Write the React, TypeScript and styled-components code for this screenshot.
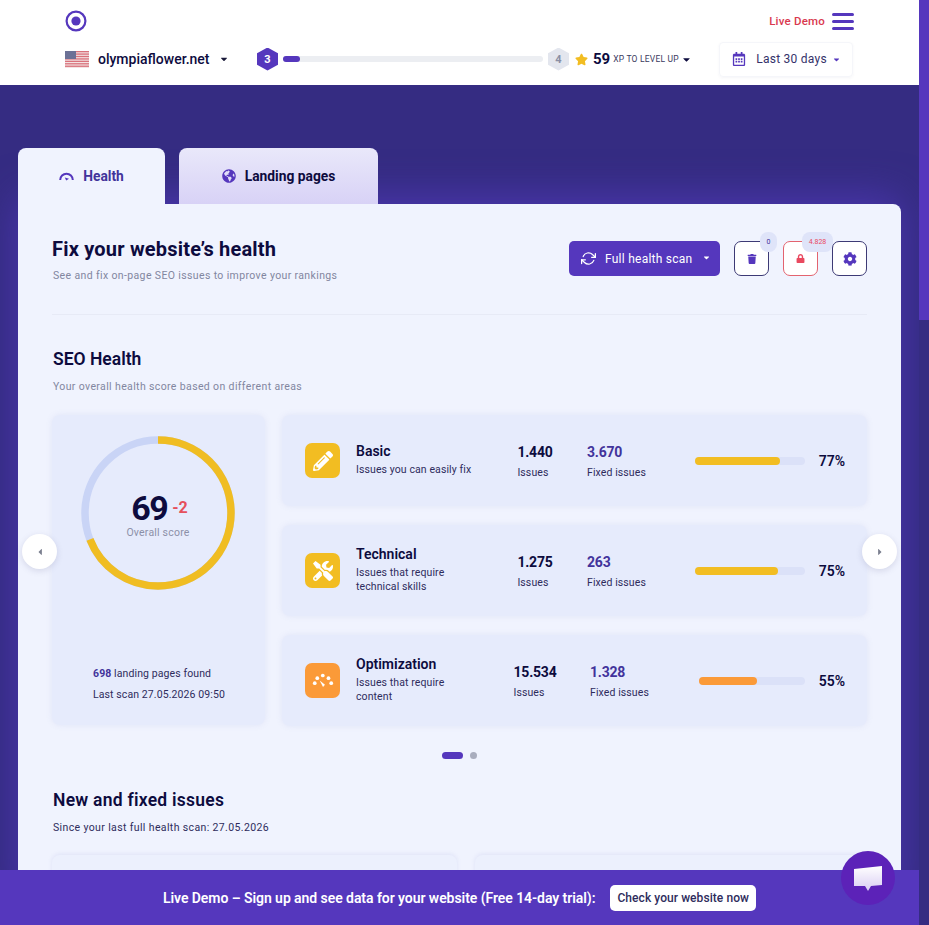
import React from "react";
import styled, { createGlobalStyle } from "styled-components";
import { FaPencilAlt, FaTools, FaTrash, FaLock, FaCog, FaGlobeAmericas, FaStar, FaCaretDown, FaCaretLeft, FaCaretRight, FaRegCalendarAlt } from "react-icons/fa";
import { FiRefreshCw } from "react-icons/fi";

const Global = createGlobalStyle`
  html, body { margin: 0; padding: 0; height: 100%; overflow: hidden; }
  body { font-family: "Roboto", "Liberation Sans", sans-serif; color: #0d0b3e; }
  * { box-sizing: border-box; }
`;

const Page = styled.div`
  display: flex;
  width: 929px;
  height: 925px;
  overflow: hidden;
  position: relative;
  background: #352c82;
`;
const Main = styled.div`
  width: 919px;
  height: 925px;
  overflow: hidden;
  flex: none;
`;
const Scrollbar = styled.div`
  width: 10px;
  flex: none;
  background: #352c82;
`;
const Thumb = styled.div`
  height: 320px;
  background: #5537bd;
`;
const Header = styled.header`
  height: 85px;
  background: #fff;
  padding: 0 65px;
  display: flex;
  flex-direction: column;
`;
const TopRow = styled.div`
  height: 41px;
  display: flex;
  align-items: center;
  justify-content: space-between;
  padding-top: 1px;
`;
const RightTop = styled.div`
  display: flex;
  align-items: center;
  gap: 7px;
`;
const LiveDemo = styled.span`
  font-size: 11.5px;
  font-weight: 500;
  color: #d9394f;
  letter-spacing: 0.2px;
`;
const Burger = styled.div`
  width: 22px;
  display: flex;
  flex-direction: column;
  gap: 4px;
`;
const BurgerLine = styled.span`
  height: 3px;
  border-radius: 2px;
  background: #5537bd;
`;
const BottomRow = styled.div`
  height: 36px;
  display: flex;
  align-items: center;
`;
const Domain = styled.span`
  font-size: 14px;
  font-weight: 500;
  color: #0d0b3e;
  margin-left: 9px;
  letter-spacing: 0;
  width: 121px;
`;
const DomainCaret = styled.span`
  width: 38px;
  color: #1a1a3a;
  font-size: 10px;
  display: flex;
`;
const Hexagon = styled.div<{ $active?: boolean }>`
  width: 21px;
  height: 23px;
  flex: none;
  clip-path: polygon(50% 0, 100% 25%, 100% 75%, 50% 100%, 0 75%, 0 25%);
  background: ${(p) => (p.$active ? "#5537bd" : "#e3e6ee")};
  color: ${(p) => (p.$active ? "#fff" : "#8a8fa5")};
  font-size: 11px;
  font-weight: 700;
  display: flex;
  align-items: center;
  justify-content: center;
`;
const XpTrack = styled.div`
  width: 260px;
  height: 6px;
  margin: 0 5px;
  border-radius: 4px;
  background: #eceef2;
`;
const XpFill = styled.div`
  width: 17px;
  height: 100%;
  border-radius: 4px;
  background: #5537bd;
`;
const XpNumber = styled.span`
  font-size: 15px;
  font-weight: 700;
  margin-left: 5px;
  color: #0d0b3e;
`;
const XpLabel = styled.span`
  font-size: 8.5px;
  color: #3a3a5e;
  margin-left: 3px;
  letter-spacing: 0.2px;
  width: 68px;
`;
const StarMark = styled.span`
  color: #f2bd22;
  font-size: 13px;
  display: flex;
  margin-left: 6px;
`;
const SmallCaret = styled.span`
  color: #0d0b3e;
  font-size: 11px;
  display: flex;
  width: 38px;
`;
const DateBox = styled.div`
  width: 134px;
  height: 35px;
  border: 1px solid #f5f6fa;
  border-radius: 4px;
  display: flex;
  align-items: center;
  padding: 0 11px 0 12px;
  box-shadow: 0 1px 3px rgba(50, 50, 110, 0.05);
`;
const CalendarMark = styled.span`
  color: #5537bd;
  font-size: 14px;
  display: flex;
  margin-right: 10px;
`;
const DateText = styled.span`
  font-size: 12px;
  color: #35326a;
  letter-spacing: 0.25px;
  flex: 1;
`;
const DateCaret = styled.span`
  font-size: 9px;
  color: #5537bd;
  display: flex;
`;
const Content = styled.div`
  padding: 63px 18px 0;
`;
const Tabs = styled.div`
  display: flex;
  gap: 14px;
  height: 56px;
  position: relative;
  z-index: 1;
`;
const Tab = styled.div<{ $active?: boolean }>`
  width: ${(p) => (p.$active ? "147px" : "199px")};
  border-radius: 8px 8px 0 0;
  background: ${(p) => (p.$active ? "#f0f3fe" : "linear-gradient(#e9e8fa, #d8d2f6)")};
  display: flex;
  align-items: center;
  justify-content: center;
  gap: 9px;
  font-size: 13.8px;
  font-weight: 700;
  color: ${(p) => (p.$active ? "#42339b" : "#0d0b3e")};
  padding-bottom: 1px;
`;
const TabIcon = styled.span`
  color: #5537bd;
  display: flex;
  font-size: 14px;
`;
const Card = styled.section`
  position: relative;
  background: #f0f3fe;
  height: 700px;
  border-radius: 0 8px 0 0;
  padding: 0 34px;
  box-shadow: 0 -6px 40px rgba(88, 60, 200, 0.65);
`;
const CardHead = styled.div`
  height: 111px;
  border-bottom: 1px solid #e7eaf6;
  display: flex;
  justify-content: space-between;
  padding-top: 37px;
`;
const Title = styled.h1`
  font-size: 20px;
  font-weight: 700;
  line-height: 24px;
  letter-spacing: 0.2px;
  margin: -4px 0 0;
  color: #0d0b3e;
`;
const Sub = styled.p`
  font-size: 10.5px;
  line-height: 14px;
  margin: 8px 0 0 1px;
  color: #8286a0;
  letter-spacing: 0.37px;
`;
const Actions = styled.div`
  display: flex;
  gap: 14px;
`;
const ScanButton = styled.div`
  width: 151px;
  height: 35px;
  border-radius: 5px;
  background: #5537bd;
  color: #fff;
  display: flex;
  align-items: center;
  padding-left: 12px;
  font-size: 12px;
  font-weight: 400;
  letter-spacing: 0.25px;
`;
const ScanLabel = styled.span`
  margin: 0 9px 0 9px;
`;
const ScanIcon = styled.span`
  display: flex;
  font-size: 15px;
`;
const ScanCaret = styled.span`
  display: flex;
  font-size: 9px;
  margin-top: -3px;
`;
const IconButton = styled.div<{ $danger?: boolean }>`
  width: 35px;
  height: 35px;
  border-radius: 7px;
  background: #fff;
  border: 1px solid ${(p) => (p.$danger ? "#e3636f" : "#3d3a75")};
  color: ${(p) => (p.$danger ? "#e9495f" : "#5537bd")};
  font-size: ${(p) => (p.$danger ? "9px" : "10px")};
  display: flex;
  align-items: center;
  justify-content: center;
  position: relative;
`;
const CogButton = styled(IconButton)`
  font-size: 14px;
`;
const Badge = styled.span<{ $danger?: boolean }>`
  position: absolute;
  top: -10px;
  left: ${(p) => (p.$danger ? "18px" : "25px")};
  min-width: ${(p) => (p.$danger ? "31px" : "17px")};
  height: 20px;
  border-radius: 8px;
  background: #dfe4f9;
  color: ${(p) => (p.$danger ? "#e9495f" : "#42339b")};
  font-size: 7px;
  display: flex;
  align-items: center;
  justify-content: center;
`;
const SectionTitle = styled.h2`
  font-size: 17.5px;
  font-weight: 600;
  line-height: 22px;
  margin: 33px 0 0 1px;
  color: #0d0b3e;
`;
const SectionSub = styled.p`
  font-size: 10.5px;
  line-height: 14px;
  margin: 10px 0 0 1px;
  color: #8286a0;
  letter-spacing: 0.37px;
`;
const HealthGrid = styled.div`
  display: grid;
  grid-template-columns: 213px 585px;
  gap: 17px;
  margin-top: 21px;
  margin-right: -2px;
`;
const ScorePanel = styled.div`
  height: 310px;
  background: #e6ebfc;
  border-radius: 8px;
  box-shadow: 0 0 6px rgba(120, 130, 200, 0.12);
  display: flex;
  flex-direction: column;
  align-items: center;
  padding-top: 21px;
`;
const Donut = styled.div`
  width: 154px;
  height: 154px;
  position: relative;
  margin-left: -1px;
`;
const DonutCenter = styled.div`
  position: absolute;
  inset: 0;
  display: flex;
  flex-direction: column;
  align-items: center;
  justify-content: center;
  padding-top: 4px;
`;
const ScoreLine = styled.div`
  display: flex;
  align-items: center;
  gap: 5px;
  padding-left: 3px;
`;
const ScoreValue = styled.span`
  font-size: 34px;
  font-weight: 700;
  line-height: 32px;
  letter-spacing: -1.6px;
  color: #0d0b3e;
`;
const ScoreDelta = styled.span`
  font-size: 16px;
  font-weight: 700;
  color: #e5505c;
`;
const ScoreCaption = styled.span`
  font-size: 10.5px;
  color: #8c90a8;
  margin-top: 2px;
  letter-spacing: 0.2px;
`;
const ScoreFoot = styled.div`
  margin-top: 73px;
  font-size: 10.5px;
  line-height: 21px;
  color: #2e2c5c;
  letter-spacing: 0.1px;
  padding-left: 1px;
`;
const FootStrong = styled.strong`
  color: #42339b;
  font-weight: 700;
`;
const Rows = styled.div`
  display: flex;
  flex-direction: column;
  gap: 19px;
`;
const Row = styled.div`
  height: 91px;
  background: #e6ebfc;
  border-radius: 8px;
  box-shadow: 0 0 6px rgba(120, 130, 200, 0.12);
  display: grid;
  grid-template-columns: 51px 146px 66px 127px 1fr;
  align-items: center;
  padding: 0 22px 0 23px;
`;
const RowIcon = styled.div<{ $color: string }>`
  width: 35px;
  height: 35px;
  border-radius: 7px;
  background: ${(p) => p.$color};
  color: #fff;
  font-size: 20px;
  display: flex;
  align-items: center;
  justify-content: center;
`;
const RowInfo = styled.div`
  margin-top: -2px;
`;
const RowTitle = styled.div`
  font-size: 14px;
  font-weight: 600;
  line-height: 18px;
  color: #0d0b3e;
  margin-bottom: 3px;
`;
const RowSub = styled.div`
  font-size: 10.5px;
  line-height: 14px;
  color: #2e2c5c;
  letter-spacing: 0.1px;
  width: 122px;
`;
const Metric = styled.div`
  display: flex;
  flex-direction: column;
  align-items: flex-start;
  justify-self: center;
  padding-top: 2px;
`;
const FixedMetric = styled.div<{ $offset: number }>`
  padding: 2px 0 0 ${(p) => p.$offset}px;
`;
const MetricValue = styled.div<{ $accent?: boolean }>`
  font-size: 14px;
  font-weight: 700;
  line-height: 19px;
  letter-spacing: -0.2px;
  color: ${(p) => (p.$accent ? "#42339b" : "#0d0b3e")};
`;
const MetricLabel = styled.div`
  font-size: 10.5px;
  line-height: 14px;
  margin-top: 4px;
  color: #2e2c5c;
  letter-spacing: 0.1px;
`;
const Progress = styled.div`
  display: flex;
  align-items: center;
  justify-content: flex-end;
  gap: 13px;
`;
const BarTrack = styled.div<{ $w: number }>`
  width: ${(p) => p.$w}px;
  height: 8px;
  border-radius: 4px;
  background: #dbe1f8;
`;
const BarFill = styled.div<{ $color: string }>`
  height: 100%;
  border-radius: 4px;
  background: ${(p) => p.$color};
`;
const Pct = styled.span`
  font-size: 14px;
  font-weight: 600;
  color: #0d0b3e;
  width: 27px;
  text-align: right;
`;
const Dots = styled.div`
  display: flex;
  justify-content: center;
  gap: 7px;
  margin-top: 26px;
  height: 7px;
  margin-left: -1px;
`;
const Dot = styled.span<{ $active?: boolean }>`
  width: ${(p) => (p.$active ? "21px" : "7px")};
  height: 7px;
  border-radius: 4px;
  background: ${(p) => (p.$active ? "#5537bd" : "#a9adbe")};
`;
const SecondTitle = styled(SectionTitle)`
  margin-top: 30px;
  letter-spacing: 0.25px;
`;
const Since = styled.p`
  font-size: 10.5px;
  line-height: 14px;
  margin: 10px 0 0 1px;
  color: #2e2c5c;
  letter-spacing: 0.37px;
`;
const IssueCards = styled.div`
  display: grid;
  grid-template-columns: 405px 392px;
  gap: 18px;
  margin-top: 20px;
`;
const IssueCard = styled.div`
  height: 120px;
  border-radius: 8px;
  background: #ecf0fd;
  box-shadow: 0 -1px 4px rgba(120, 130, 200, 0.14);
`;
const Arrow = styled.div<{ $side: "left" | "right" }>`
  position: absolute;
  top: 330px;
  ${(p) => (p.$side === "left" ? "left: 4px;" : "right: 4px;")}
  width: 35px;
  height: 35px;
  border-radius: 50%;
  background: #fff;
  box-shadow: 0 2px 6px rgba(90, 90, 140, 0.18);
  color: #7b7f8f;
  font-size: 10px;
  display: flex;
  align-items: center;
  justify-content: center;
`;
const Banner = styled.div`
  position: absolute;
  left: 0;
  bottom: 0;
  width: 919px;
  height: 55px;
  background: #5537bd;
  display: flex;
  align-items: center;
  justify-content: center;
  gap: 15px;
  color: #fff;
`;
const BannerText = styled.span`
  font-size: 14px;
  font-weight: 600;
  letter-spacing: -0.06px;
`;
const BannerButton = styled.span`
  height: 26px;
  padding: 0 7px;
  border-radius: 5px;
  background: #fff;
  color: #2e2c5c;
  font-size: 12px;
  font-weight: 500;
  letter-spacing: 0.07px;
  display: flex;
  align-items: center;
`;
const Chat = styled.div`
  position: absolute;
  left: 841px;
  top: 851px;
  width: 54px;
  height: 54px;
  border-radius: 50%;
  background: #5c22b8;
  display: flex;
  align-items: center;
  justify-content: center;
`;

const Logo = () => (
  <svg width="22" height="22" viewBox="0 0 22 22">
    <circle cx="11" cy="11" r="9.4" fill="none" stroke="#5537bd" strokeWidth="2.2" />
    <circle cx="11" cy="11" r="4.6" fill="#5537bd" />
  </svg>
);

const Flag = () => {
  const stripes = [0, 1, 2, 3, 4, 5, 6];
  return (
    <svg width="24" height="17" viewBox="0 0 24 17">
      <rect width="24" height="17" fill="#f3e4e4" />
      {stripes.map((i) => (
        <rect key={i} y={i * 2.43} width="24" height="1.3" fill="#d9717b" />
      ))}
      <rect width="11" height="8" fill="#6c7196" />
    </svg>
  );
};

const Gauge = () => (
  <svg width="15" height="10" viewBox="0 0 15 10">
    <path d="M1.2 9a6.3 6.3 0 0 1 12.6 0" fill="none" stroke="#5537bd" strokeWidth="2" />
    <path d="M5.8 6.6 10 7.8 7.2 9.6z" fill="#5537bd" />
  </svg>
);

const SpeedDots = () => (
  <svg width="22" height="18" viewBox="0 0 20 16" fill="#fff">
    <circle cx="2.5" cy="10" r="1.7" />
    <circle cx="4.8" cy="5.4" r="1.7" />
    <circle cx="9.8" cy="3" r="1.7" />
    <circle cx="15" cy="5.4" r="1.7" />
    <circle cx="17.5" cy="10" r="1.7" />
    <path d="M7 7.6 11.8 11.4 10 13.5z" />
  </svg>
);

const ChatIcon = () => (
  <svg width="32" height="30" viewBox="0 0 32 30">
    <defs>
      <linearGradient id="bubble" x1="0" y1="0" x2="0" y2="1">
        <stop offset="0" stopColor="#ffffff" />
        <stop offset="1" stopColor="#d9cdf3" />
      </linearGradient>
    </defs>
    <path d="M2 6 30 3v19l-11 1-3 5-3-5H2z" fill="url(#bubble)" />
  </svg>
);

const rows = [
  { title: "Basic", sub: "Issues you can easily fix", issues: "1.440", fixed: "3.670", pct: 77, color: "#f2bd22", w: 110, offset: 19, icon: <FaPencilAlt /> },
  { title: "Technical", sub: "Issues that require technical skills", issues: "1.275", fixed: "263", pct: 75, color: "#f2bd22", w: 110, offset: 19, icon: <FaTools /> },
  { title: "Optimization", sub: "Issues that require content", issues: "15.534", fixed: "1.328", pct: 55, color: "#fb9a38", w: 106, offset: 22, icon: <SpeedDots /> },
];

export default function App() {
  return (
    <Page>
      <Global />
      <Main>
        <Header>
          <TopRow>
            <Logo />
            <RightTop>
              <LiveDemo>Live Demo</LiveDemo>
              <Burger>
                <BurgerLine />
                <BurgerLine />
                <BurgerLine />
              </Burger>
            </RightTop>
          </TopRow>
          <BottomRow>
            <Flag />
            <Domain>olympiaflower.net</Domain>
            <DomainCaret><FaCaretDown /></DomainCaret>
            <Hexagon $active>3</Hexagon>
            <XpTrack><XpFill /></XpTrack>
            <Hexagon>4</Hexagon>
            <StarMark><FaStar /></StarMark>
            <XpNumber>59</XpNumber>
            <XpLabel>XP TO LEVEL UP</XpLabel>
            <SmallCaret><FaCaretDown /></SmallCaret>
            <DateBox>
              <CalendarMark><FaRegCalendarAlt /></CalendarMark>
              <DateText>Last 30 days</DateText>
              <DateCaret><FaCaretDown /></DateCaret>
            </DateBox>
          </BottomRow>
        </Header>
        <Content>
          <Tabs>
            <Tab $active><TabIcon><Gauge /></TabIcon>Health</Tab>
            <Tab><TabIcon><FaGlobeAmericas /></TabIcon>Landing pages</Tab>
          </Tabs>
          <Card>
            <CardHead>
              <div>
                <Title>Fix your website’s health</Title>
                <Sub>See and fix on-page SEO issues to improve your rankings</Sub>
              </div>
              <Actions>
                <ScanButton>
                  <ScanIcon><FiRefreshCw /></ScanIcon>
                  <ScanLabel>Full health scan</ScanLabel>
                  <ScanCaret><FaCaretDown /></ScanCaret>
                </ScanButton>
                <IconButton><FaTrash /><Badge>0</Badge></IconButton>
                <IconButton $danger><FaLock /><Badge $danger>4.828</Badge></IconButton>
                <CogButton><FaCog /></CogButton>
              </Actions>
            </CardHead>
            <SectionTitle>SEO Health</SectionTitle>
            <SectionSub>Your overall health score based on different areas</SectionSub>
            <HealthGrid>
              <ScorePanel>
                <Donut>
                  <svg width="154" height="154" viewBox="0 0 154 154">
                    <circle cx="77" cy="77" r="73" fill="none" stroke="#c9d4f6" strokeWidth="7.5" />
                    <circle
                      cx="77"
                      cy="77"
                      r="73"
                      fill="none"
                      stroke="#f0bd22"
                      strokeWidth="7.5"
                      strokeDasharray={`${2 * Math.PI * 73 * 0.69} ${2 * Math.PI * 73}`}
                      transform="rotate(-90 77 77)"
                    />
                  </svg>
                  <DonutCenter>
                    <ScoreLine>
                      <ScoreValue>69</ScoreValue>
                      <ScoreDelta>-2</ScoreDelta>
                    </ScoreLine>
                    <ScoreCaption>Overall score</ScoreCaption>
                  </DonutCenter>
                </Donut>
                <ScoreFoot>
                  <div><FootStrong>698</FootStrong> landing pages found</div>
                  <div>Last scan 27.05.2026 09:50</div>
                </ScoreFoot>
              </ScorePanel>
              <Rows>
                {rows.map((r) => (
                  <Row key={r.title}>
                    <RowIcon $color={r.color}>{r.icon}</RowIcon>
                    <RowInfo>
                      <RowTitle>{r.title}</RowTitle>
                      <RowSub>{r.sub}</RowSub>
                    </RowInfo>
                    <Metric>
                      <MetricValue>{r.issues}</MetricValue>
                      <MetricLabel>Issues</MetricLabel>
                    </Metric>
                    <FixedMetric $offset={r.offset}>
                      <MetricValue $accent>{r.fixed}</MetricValue>
                      <MetricLabel>Fixed issues</MetricLabel>
                    </FixedMetric>
                    <Progress>
                      <BarTrack $w={r.w}>
                        <BarFill $color={r.color} style={{ width: `${r.pct}%` }} />
                      </BarTrack>
                      <Pct>{r.pct}%</Pct>
                    </Progress>
                  </Row>
                ))}
              </Rows>
            </HealthGrid>
            <Dots>
              <Dot $active />
              <Dot />
            </Dots>
            <SecondTitle>New and fixed issues</SecondTitle>
            <Since>Since your last full health scan: 27.05.2026</Since>
            <IssueCards>
              <IssueCard />
              <IssueCard />
            </IssueCards>
            <Arrow $side="left"><FaCaretLeft /></Arrow>
            <Arrow $side="right"><FaCaretRight /></Arrow>
          </Card>
        </Content>
      </Main>
      <Scrollbar><Thumb /></Scrollbar>
      <Banner>
        <BannerText>Live Demo – Sign up and see data for your website (Free 14-day trial):</BannerText>
        <BannerButton>Check your website now</BannerButton>
      </Banner>
      <Chat><ChatIcon /></Chat>
    </Page>
  );
}
